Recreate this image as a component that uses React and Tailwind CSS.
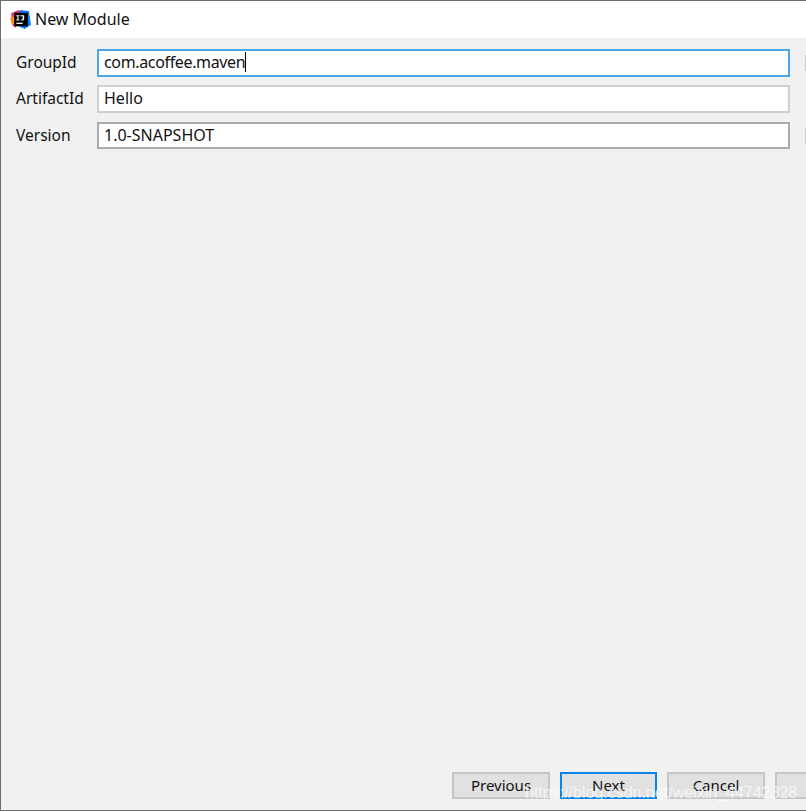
const fields = [
  { label: 'GroupId', value: 'com.acoffee.maven', focused: true, hint: true, textClass: 'tracking-[-0.35px]' },
  { label: 'ArtifactId', value: 'Hello', soft: true },
  { label: 'Version', value: '1.0-SNAPSHOT', hint: true, rowClass: 'mt-px h-[27px]' },
];

const IdeaLogo = () => (
  <svg width="21" height="21" viewBox="0 0 20 20" className="shrink-0">
    <path d="M1 4 L8 1 L11 5 L5 18 L2 15 Z" fill="#f0386b" />
    <path d="M0 9 L4 7 L6 14 L2 15 Z" fill="#ff8a1f" />
    <path d="M9 1 L18 2 L20 15 L14 19 L7 16 Z" fill="#087cfa" />
    <rect x="4" y="3.5" width="13" height="13" fill="#000" />
    <rect x="6" y="13" width="6" height="1.2" fill="#fff" />
    <path d="M6 6 H9 V7 H8 V10 H9 V11 H6 V10 H7 V7 H6 Z M10 6 H13.5 V10 Q13.5 11 12 11 H10.5 V10 H12 V6.9 H10 Z" fill="#fff" />
  </svg>
);

const Field = ({ label, value, focused, soft, hint, rowClass = 'h-[28px]', textClass = '' }) => (
  <div className={`flex items-center ${rowClass}`}>
    <label className="w-[96px] pl-[15px] shrink-0 text-[15.5px] text-[#111]">{label}</label>
    <div
      className={`w-[693px] h-full shrink-0 bg-white flex items-center pl-[5px] pb-[2px] border-2 text-[16px] text-[#111] ${
        focused ? 'border-[#4ea6ea]' : soft ? 'border-[#cfcfcf]' : 'border-[#ababab]'
      }`}
    >
      <span className={textClass}>{value}</span>
      {focused && <span className="w-px h-[20px] bg-black" />}
    </div>
    {hint && <div className="ml-[15px] w-[2px] h-[16px] bg-[#c8c8c8] shrink-0" />}
  </div>
);

const Button = ({ children, primary, widthClass = 'w-[98px]' }) => (
  <button
    className={`h-[27px] shrink-0 bg-[#e1e1e1] border-2 text-[15px] text-[#111] ${widthClass} ${
      primary ? 'border-[#0a84e6]' : 'border-[#c6c6c6]'
    }`}
  >
    {children}
  </button>
);

export default function App() {
  return (
    <div className="relative w-[806px] h-[811px] overflow-hidden flex flex-col bg-[#f1f1f1] border-t border-l border-b border-[#6e6e6e] font-['Noto_Sans','Open_Sans',sans-serif]">
      <div className="h-[37px] shrink-0 bg-white flex items-center gap-[4px] pl-[9px] text-[16px] text-[#111]">
        <IdeaLogo />
        <span className="pb-[2px]">New Module</span>
      </div>

      <div className="flex flex-col gap-[8px] pt-[11px]">
        {fields.map((f) => (
          <Field key={f.label} {...f} />
        ))}
      </div>

      <div className="mt-auto mb-[11px] flex gap-[10px] pl-[451px]">
        <Button>Previous</Button>
        <Button primary widthClass="w-[97px]">Next</Button>
        <Button>Cancel</Button>
        <Button />
      </div>

      {/* csdn watermark over the buttons */}
      <span className="absolute left-[524px] top-[780px] font-['Liberation_Sans',sans-serif] text-[16px] text-white/70 whitespace-nowrap">
        https://blog.csdn.net/weixin_44742328
      </span>
    </div>
  );
}
